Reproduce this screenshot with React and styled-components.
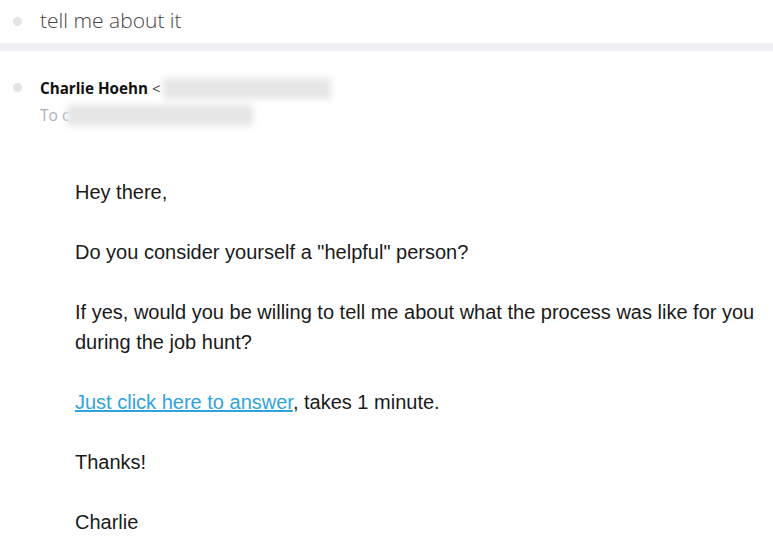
import React from "react";
import styled, { createGlobalStyle } from "styled-components";

const Global = createGlobalStyle`
  html, body { margin: 0; padding: 0; background: #fff; }
  body { width: 773px; height: 544px; overflow: hidden; }
`;

const Page = styled.div`
  display: flex;
  flex-direction: column;
  width: 773px;
`;

const SubjectBar = styled.div`
  display: flex;
  align-items: center;
  height: 43px;
  padding-left: 13px;
  gap: 18px;
`;

const Dot = styled.span`
  width: 9px;
  height: 9px;
  border-radius: 50%;
  background: #e4e4e4;
  flex: none;
`;

const Subject = styled.h1`
  margin: 0;
  font-family: "Open Sans", sans-serif;
  font-weight: 300;
  font-size: 21px;
  color: #444;
  position: relative;
  top: -2px;
`;

const Divider = styled.div`
  height: 7px;
  background: #f0f0f4;
  border-bottom: 1px solid #eef2f8;
`;

const Header = styled.div`
  display: flex;
  gap: 18px;
  padding: 30px 0 0 13px;
  align-items: flex-start;
`;

const HeaderDot = styled(Dot)`
  margin-top: 2px;
`;

const HeaderText = styled.div`
  display: flex;
  flex-direction: column;
  font-family: "Open Sans", sans-serif;
  font-size: 15.2px;
  line-height: 27px;
  margin-top: -6px;
`;

const FromLine = styled.div`
  display: flex;
  align-items: center;
  color: #111;
`;

const Name = styled.b`
  font-weight: 700;
  margin-right: 4px;
`;

const Bracket = styled.span`
  color: #444;
`;

const ToLine = styled.div`
  display: flex;
  align-items: center;
  color: #a9b0bd;
  font-size: 15.5px;
`;

const Blur = styled.span`
  display: inline-block;
  width: ${p => p.$w}px;
  height: 21px;
  background: #e6e6e6;
  filter: blur(3px);
  margin-left: ${p => p.$ml || 0}px;
`;

const Body = styled.div`
  padding: 48px 0 0 75px;
  font-family: "Liberation Sans", Arial, sans-serif;
  font-size: 20px;
  line-height: 30px;
  color: #1a1a1a;
`;

const P = styled.p`
  margin: 0 0 30px 0;
`;

const Link = styled.a`
  color: #2fa4dc;
  text-decoration: underline;
`;

export default function App() {
  return (
    <Page>
      <Global />
      <SubjectBar>
        <Dot />
        <Subject>tell me about it</Subject>
      </SubjectBar>
      <Divider />
      <Header>
        <HeaderDot />
        <HeaderText>
          <FromLine>
            <Name>Charlie Hoehn</Name>
            <Bracket>&lt;</Bracket>
            <Blur $w={168} $ml={2} />
          </FromLine>
          <ToLine>
            To c
            <Blur $w={186} $ml={-2} />
          </ToLine>
        </HeaderText>
      </Header>
      <Body>
        <P>Hey there,</P>
        <P>Do you consider yourself a "helpful" person?</P>
        <P>
          If yes, would you be willing to tell me about what the process was like for you
          during the job hunt?
        </P>
        <P>
          <Link href="#">Just click here to answer</Link>, takes 1 minute.
        </P>
        <P>Thanks!</P>
        <P>Charlie</P>
      </Body>
    </Page>
  );
}
